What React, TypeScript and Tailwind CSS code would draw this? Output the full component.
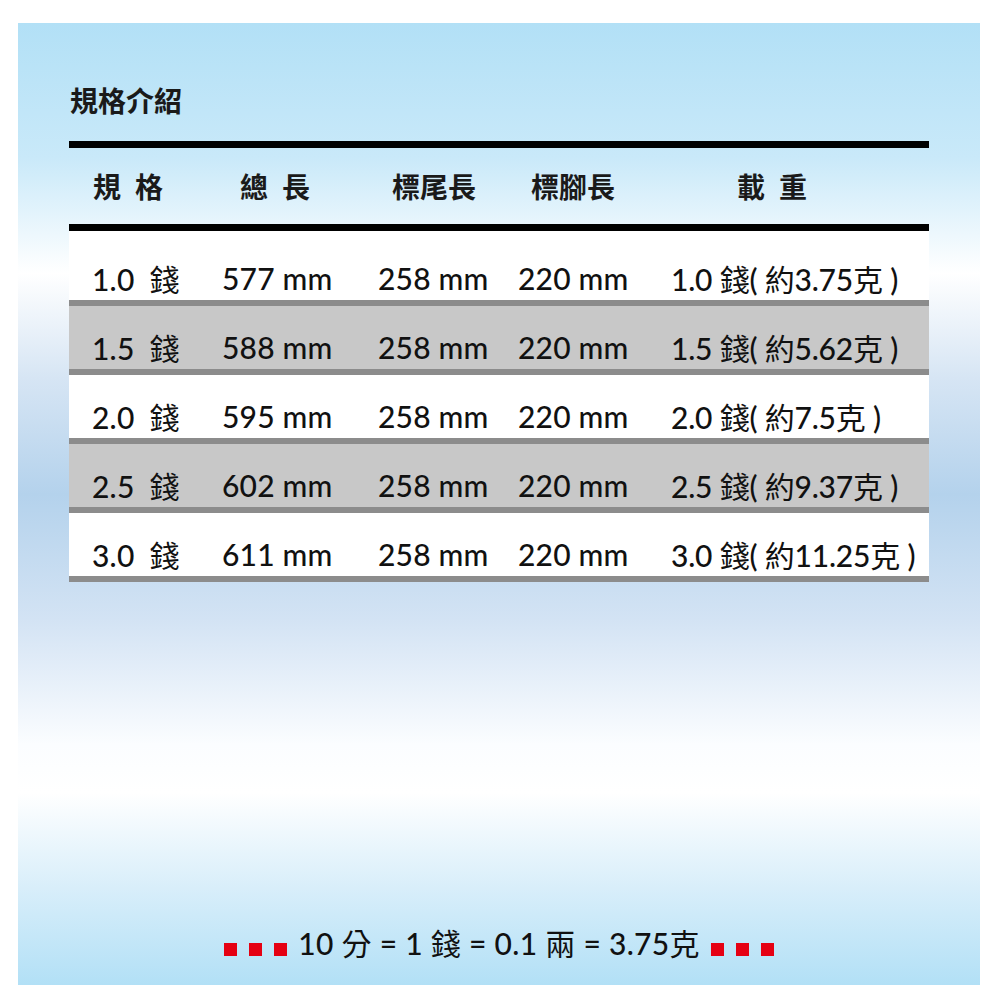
import React from "react";

const latin = "font-['Lato','Noto_Sans_CJK_TC',sans-serif]";
const cjk = "font-['Noto_Sans_CJK_TC','Noto_Sans',sans-serif]";

const rows = [
  ["1.0", "577 mm", "1.0 錢( 約3.75克 )"],
  ["1.5", "588 mm", "1.5 錢( 約5.62克 )"],
  ["2.0", "595 mm", "2.0 錢( 約7.5克 )"],
  ["2.5", "602 mm", "2.5 錢( 約9.37克 )"],
  ["3.0", "611 mm", "3.0 錢( 約11.25克 )"],
];

function T({ s }: { s: string }) {
  const parts = s.split(/([\u4e00-\u9fff]+)/);
  return (
    <>
      {parts.map((p, i) =>
        /[\u4e00-\u9fff]/.test(p) ? (
          <span key={i} className={`${cjk} font-normal`}>
            {p}
          </span>
        ) : (
          <span key={i}>{p}</span>
        )
      )}
    </>
  );
}

function Sq() {
  return <span className="block w-[13px] h-[13px] bg-[#e50012] mb-[2px]" />;
}

export default function App() {
  return (
    <div className="w-[1000px] h-[1000px] bg-white pt-[23px] pl-[18px]">
      <div className="w-[962px] h-[962px] flex flex-col bg-[linear-gradient(to_bottom,#b2e0f6_0%,#c9e9f9_14%,#ffffff_26%,#d6e5f4_37%,#b4d2ec_49%,#d3e3f4_62%,#fbfdff_75%,#ffffff_80%,#d8eefa_90%,#b2e0f6_100%)]">
        <div className={`${cjk} font-bold text-[28px] leading-[28px] text-[#1a1a1a] pl-[52px] pt-[63px]`}>
          規格介紹
        </div>
        <div className="ml-[51px] w-[860px] mt-[27px]">
          <div className="h-[7px] bg-black" />
          <div className={`${cjk} font-bold text-[28px] leading-[28px] text-[#1a1a1a] h-[76px] flex items-center pl-[24px]`}>
            <span className="w-[147px]">規{"\u2002"}格</span>
            <span className="w-[152px]">總{"\u2002"}長</span>
            <span className="w-[139px]">標尾長</span>
            <span className="w-[206px]">標腳長</span>
            <span>載{"\u2002"}重</span>
          </div>
          <div className="h-[7px] bg-black" />
          {rows.map((r, i) => (
            <div key={i}>
              <div
                className={`${latin} font-medium text-[30px] leading-[30px] tracking-[0.2px] text-[#111] flex items-start pl-[23px] ${
                  i === 0 ? "h-[69px] pt-[32px]" : "h-[63px] pt-[26px]"
                } ${i % 2 === 1 ? "bg-[#c8c8c8]" : "bg-white"}`}
              >
                <span className="w-[130px] whitespace-pre">
                  {r[0]}
                  <span className={`${cjk} font-normal ml-[15px]`}>錢</span>
                </span>
                <span className="w-[156px]">{r[1]}</span>
                <span className="w-[140px]">258 mm</span>
                <span className="w-[153px]">220 mm</span>
                <span className="whitespace-pre tracking-[-0.2px]">
                  <T s={r[2]} />
                </span>
              </div>
              <div className="h-[6px] bg-[#8c8c8c]" />
            </div>
          ))}
        </div>
        <div className="mt-auto pb-[27px] flex justify-center items-end">
          <div className="flex items-end gap-[12px]">
            <Sq />
            <Sq />
            <Sq />
          </div>
          <span className={`${latin} font-medium text-[30px] leading-[30px] tracking-[0.3px] text-[#111] mx-[11px] whitespace-pre`}>
            <T s="10 分 = 1 錢 = 0.1 兩 = 3.75克" />
          </span>
          <div className="flex items-end gap-[12px]">
            <Sq />
            <Sq />
            <Sq />
          </div>
        </div>
      </div>
    </div>
  );
}
